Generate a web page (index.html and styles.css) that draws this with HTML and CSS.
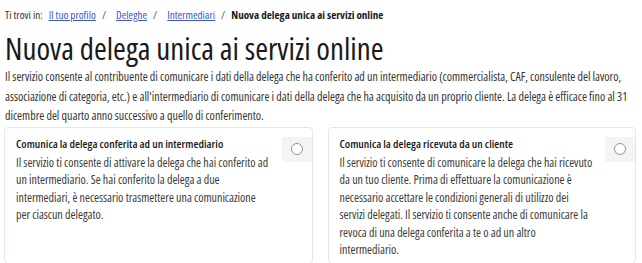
FILE: index.html
```html
<!DOCTYPE html>
<html lang="it">
<head>
  <meta charset="UTF-8" />
  <meta name="viewport" content="width=device-width, initial-scale=1.0"/>
  <title>Nuova delega unica ai servizi online</title>
  <link rel="stylesheet" href="styles.css">
</head>
<body>

  <nav class="breadcrumb">
    <span class="crumb-label">Ti trovi in:</span>
    <a href="#">Il tuo profilo</a>
    <span class="sep">/</span>
    <a href="#">Deleghe</a>
    <span class="sep">/</span>
    <a href="#">Intermediari</a>
    <span class="sep">/</span>
    <span class="current">Nuova delega unica ai servizi online</span>
  </nav>

  <h1>Nuova delega unica ai servizi online</h1>

  <p class="intro">Il servizio consente al contribuente di comunicare i dati della delega che ha conferito ad un intermediario (commercialista, CAF, consulente del lavoro, associazione di categoria, etc.) e all'intermediario di comunicare i dati della delega che ha acquisito da un proprio cliente. La delega è efficace fino al 31 dicembre del quarto anno successivo a quello di conferimento.</p>

  <div class="choices">
    <label class="card">
      <div class="card-text">
        <h2>Comunica la delega conferita ad un intermediario</h2>
        <p>Il servizio ti consente di attivare la delega che hai conferito ad un intermediario. Se hai conferito la delega a due intermediari, è necessario trasmettere una comunicazione<br>per ciascun delegato.</p>
      </div>
      <span class="radio-box"><input type="radio" name="tipo" /></span>
    </label>

    <label class="card">
      <div class="card-text">
        <h2>Comunica la delega ricevuta da un cliente</h2>
        <p>Il servizio ti consente di comunicare la delega che hai ricevuto da un tuo cliente. Prima di effettuare la comunicazione è necessario accettare le condizioni generali di utilizzo dei<br>servizi delegati. Il servizio ti consente anche di comunicare la revoca di una delega conferita a te o ad un altro<br>intermediario.</p>
      </div>
      <span class="radio-box"><input type="radio" name="tipo" /></span>
    </label>
  </div>

</body>
</html>
```

FILE: styles.css
```css
body {
  font-family: "Open Sans", sans-serif;
  font-stretch: 75%;
  color: #1a1a1a;
  background-color: #fff;
  margin: 0;
  padding: 6px 6px 0 5px;
}

.breadcrumb {
  font-size: 11.1px;
  line-height: 18px;
  color: #333;
}

.breadcrumb a {
  color: #3b55cf;
  margin-left: 4px;
}

.breadcrumb .sep {
  color: #555;
  margin: 0 4px;
}

.breadcrumb .current {
  font-weight: bold;
  color: #1a1a1a;
}

h1 {
  font-size: 31px;
  font-weight: normal;
  margin: 6px 0 0 0;
  line-height: 37px;
}

.intro {
  font-size: 12px;
  line-height: 19.5px;
  color: #333;
  margin: 0 0 1px 0;
}

.choices {
  display: flex;
  gap: 15px;
  margin-left: -1px;
}

.card {
  flex: 1;
  display: flex;
  align-items: flex-start;
  border: 1px solid #e3e6ec;
  border-radius: 4px;
  height: 128px;
  padding: 7px 0 0 11px;
}

.card-text {
  flex: 1;
  padding-right: 6px;
}

.card h2 {
  font-size: 11.5px;
  font-weight: 600;
  margin: 0 0 1px 0;
  line-height: 18px;
}

.card p {
  font-size: 12px;
  line-height: 17.6px;
  color: #3a3a3a;
  margin: 0;
}

.radio-box {
  flex: 0 0 30px;
  height: 25px;
  margin-top: 2px;
  background-color: #f3f4f6;
  display: flex;
  align-items: center;
  justify-content: center;
}

.radio-box input {
  width: 12px;
  height: 12px;
  margin: 0;
  appearance: none;
  border: 1px solid #8e949b;
  border-radius: 50%;
  background: #fff;
}
```
